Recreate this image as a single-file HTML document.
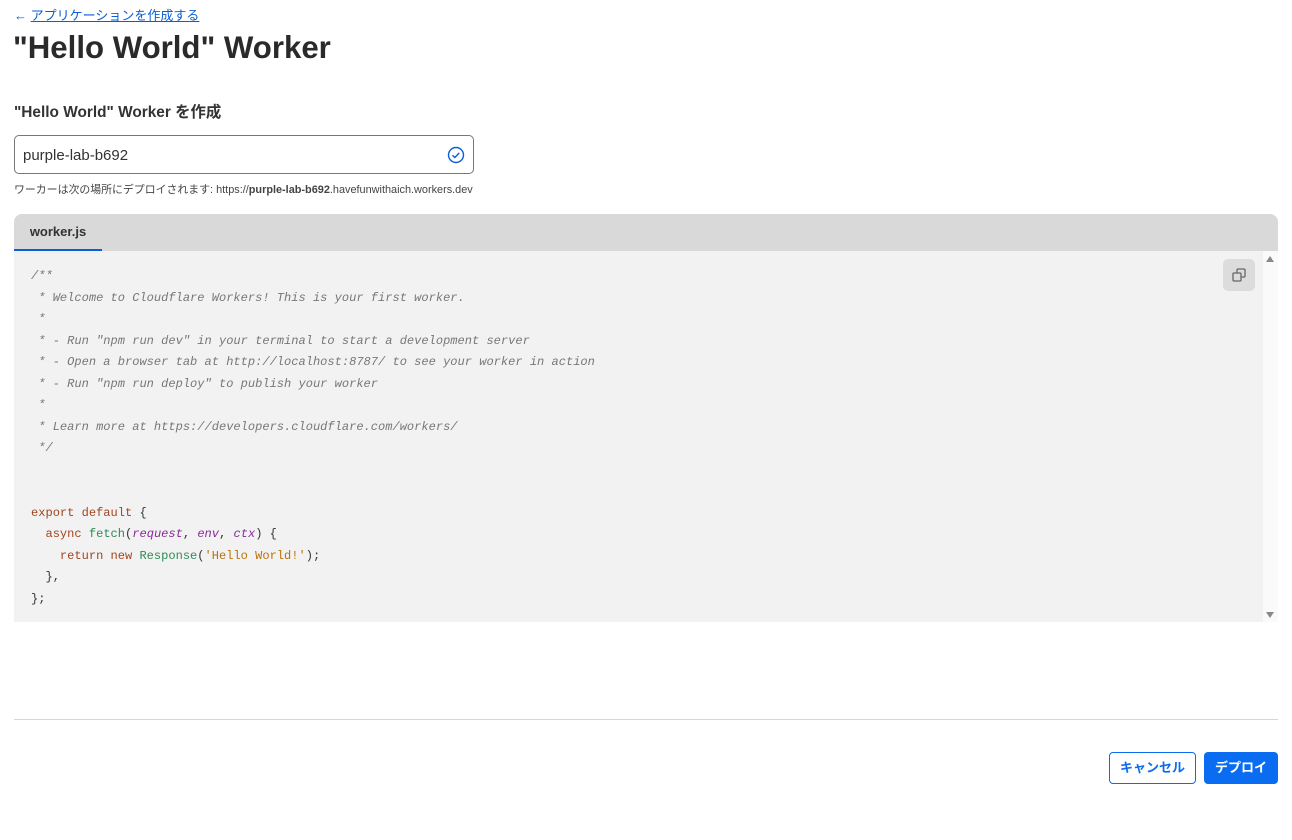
<!DOCTYPE html>
<html><head><meta charset="utf-8"><style>
*{box-sizing:border-box;margin:0;padding:0}
body{width:1292px;height:840px;background:#fff;font-family:"Liberation Sans","Noto Sans CJK JP",sans-serif;color:#222;position:relative;overflow:hidden}
.abs{position:absolute}
a{color:#0a5fd6}
.code{font-family:"Liberation Mono","DejaVu Sans Mono",monospace;font-size:12.05px;line-height:21.5px;white-space:pre;color:#333}
.c{color:#777;font-style:italic}
.k{color:#a0461e}
.f{color:#2e8b57}
.p{color:#8a2a9a;font-style:italic}
.s{color:#b8730a}
</style></head><body>
<div class="abs" style="left:14px;top:5px;font-size:13px;color:#0a5fd6">← <a style="text-decoration:underline">アプリケーションを作成する</a></div>
<div class="abs" style="left:13px;top:30px;font-size:31.2px;font-weight:bold;color:#2a2a2a">"Hello World" Worker</div>
<div class="abs" style="left:14px;top:100px;font-size:15.4px;font-weight:bold;color:#333">"Hello World" Worker を作成</div>
<div class="abs" style="left:14px;top:135px;width:460px;height:39px;border:1px solid #777;border-radius:5px;font-size:15px;padding:11px 8px;color:#333">purple-lab-b692
<svg class="abs" style="right:8px;top:10px" width="18" height="18" viewBox="0 0 18 18"><circle cx="9" cy="9" r="7.5" fill="none" stroke="#0a5fd6" stroke-width="1.4"/><path d="M5.5 9.2l2.3 2.3 4.5-4.6" fill="none" stroke="#0a5fd6" stroke-width="1.4"/></svg></div>
<div class="abs" style="left:14px;top:181px;font-size:10.9px;color:#444">ワーカーは次の場所にデプロイされます: https://<b>purple-lab-b692</b>.havefunwithaich.workers.dev</div>
<div class="abs" style="left:14px;top:214px;width:1264px;height:37px;background:#d9d9d9;border-radius:8px 8px 0 0"></div>
<div class="abs" style="left:14px;top:222px;width:88px;height:29px;border-bottom:2px solid #0a5fd6;font-size:13px;font-weight:bold;text-align:center;padding-top:2px;color:#333">worker.js</div>
<div class="abs" style="left:14px;top:251px;width:1249px;height:371px;background:#f2f2f2"></div>
<div class="abs" style="left:1263px;top:251px;width:15px;height:371px;background:#fafafa"></div>
<div class="abs" style="left:1266px;top:256px;width:0;height:0;border-left:4.5px solid transparent;border-right:4.5px solid transparent;border-bottom:6px solid #888"></div>
<div class="abs" style="left:1266px;top:612px;width:0;height:0;border-left:4.5px solid transparent;border-right:4.5px solid transparent;border-top:6px solid #888"></div>
<div class="abs" style="left:1223px;top:259px;width:32px;height:32px;background:#dcdcdc;border-radius:5px">
<svg class="abs" style="left:9px;top:9px" width="14" height="14" viewBox="0 0 14 14"><rect x="1" y="5" width="8" height="8" rx="1" fill="none" stroke="#666" stroke-width="1.3"/><path d="M5 5V2a1 1 0 0 1 1-1h6a1 1 0 0 1 1 1v6a1 1 0 0 1-1 1H9" fill="none" stroke="#666" stroke-width="1.3"/></svg></div>
<div class="abs code" style="left:31px;top:266px"><span class="c">/**
 * Welcome to Cloudflare Workers! This is your first worker.
 *
 * - Run "npm run dev" in your terminal to start a development server
 * - Open a browser tab at http://localhost:8787/ to see your worker in action
 * - Run "npm run deploy" to publish your worker
 *
 * Learn more at https://developers.cloudflare.com/workers/
 */</span>


<span class="k">export default</span> {
  <span class="k">async</span> <span class="f">fetch</span>(<span class="p">request</span>, <span class="p">env</span>, <span class="p">ctx</span>) {
    <span class="k">return new</span> <span class="f">Response</span>(<span class="s">'Hello World!'</span>);
  },
};</div>
<div class="abs" style="left:14px;top:719px;width:1264px;height:1px;background:#d6d6d6"></div>
<div class="abs" style="left:1109px;top:752px;width:87px;height:32px;border:1px solid #0a6cf0;border-radius:4px;color:#0a6cf0;font-size:13px;font-weight:bold;text-align:center;line-height:30px">キャンセル</div>
<div class="abs" style="left:1204px;top:752px;width:74px;height:32px;background:#0a6cf0;border-radius:4px;color:#fff;font-size:13px;font-weight:bold;text-align:center;line-height:32px">デプロイ</div>
</body></html>
